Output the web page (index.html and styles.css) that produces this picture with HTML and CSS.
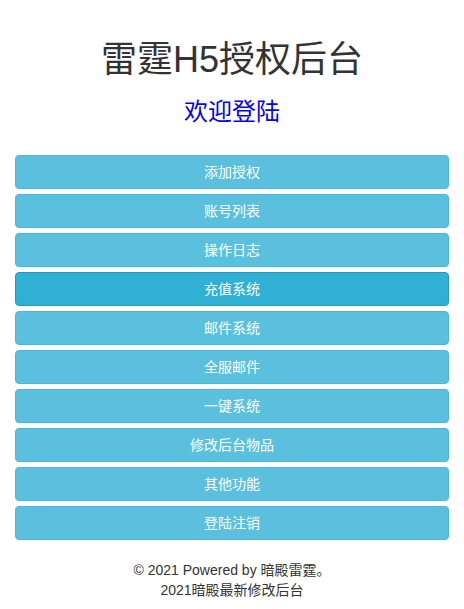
FILE: index.html
```html
<!DOCTYPE html>
<html lang="zh-CN">
<head>
<meta charset="utf-8">
<title>雷霆H5授权后台</title>
<link rel="stylesheet" href="styles.css">
</head>
<body>
<div class="container">
  <h1 class="title">雷霆H5授权后台</h1>
  <h3 class="subtitle">欢迎登陆</h3>
  <div class="menu">
    <a class="btn">添加授权</a>
    <a class="btn">账号列表</a>
    <a class="btn">操作日志</a>
    <a class="btn active">充值系统</a>
    <a class="btn">邮件系统</a>
    <a class="btn">全服邮件</a>
    <a class="btn">一键系统</a>
    <a class="btn">修改后台物品</a>
    <a class="btn">其他功能</a>
    <a class="btn">登陆注销</a>
  </div>
  <footer class="footer">
    <p>© 2021 Powered by 暗殿雷霆。</p>
    <p>2021暗殿最新修改后台</p>
  </footer>
</div>
</body>
</html>
```
FILE: styles.css
```css
* { box-sizing: border-box; }
html, body { margin: 0; padding: 0; background: #fff; }
body {
  font-family: "Liberation Sans", Arial, "Noto Sans CJK SC", sans-serif;
  font-size: 14px;
  line-height: 20px;
  color: #333;
}
.container { padding: 0 15px; }
.title {
  margin: 40px 0 0;
  font-size: 36px;
  line-height: 40px;
  font-weight: 400;
  text-align: center;
  color: #333;
}
.subtitle {
  margin: 19px 0 0;
  font-size: 24px;
  line-height: 26px;
  font-weight: 400;
  text-align: center;
  color: #0000ff;
}
.menu {
  margin-top: 30px;
  display: flex;
  flex-direction: column;
  gap: 5px;
}
.btn {
  display: block;
  height: 34px;
  padding: 6px 12px;
  line-height: 20px;
  font-size: 14px;
  text-align: center;
  color: #fff;
  background: #5bc0de;
  border: 1px solid #46b8da;
  border-radius: 4px;
  cursor: pointer;
}
.btn.active {
  background: #31b0d5;
  border-color: #269abc;
}
.footer {
  margin-top: 20px;
  text-align: center;
}
.footer p { margin: 0; line-height: 20px; }
```
